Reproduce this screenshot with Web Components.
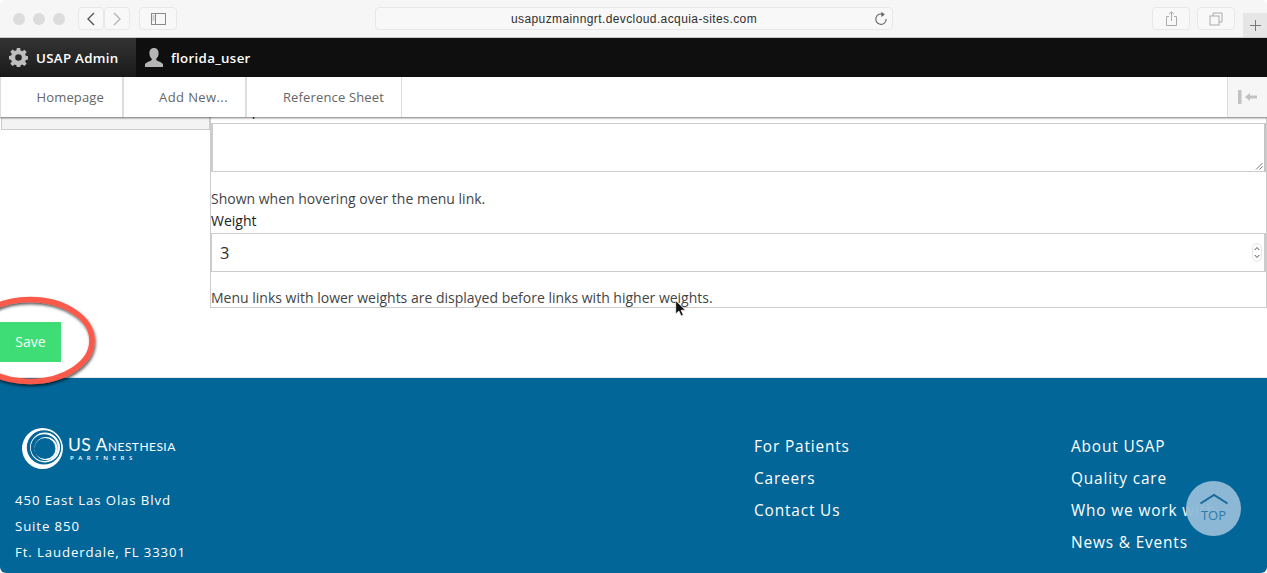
<!DOCTYPE html>
<html lang="en">
<head>
<meta charset="utf-8">
<title>USAP Admin</title>
<style>
    html, body { margin: 0; padding: 0; background: #fff; }
    body { font-family: "Open Sans", "Liberation Sans", sans-serif; width: 1267px; height: 573px; overflow: hidden; }
    #window { position: relative; width: 1267px; height: 573px; overflow: hidden; display: flex; flex-direction: column; }
</style>
</head>
<body>
<div id="window">
    <browser-bar url="usapuzmainngrt.devcloud.acquia-sites.com"></browser-bar>
    <admin-bar></admin-bar>
    <admin-tabs></admin-tabs>
    <menu-form></menu-form>
    <site-footer></site-footer>
    <red-ring></red-ring>
    <mouse-pointer></mouse-pointer>
    <top-button></top-button>
    <window-corners></window-corners>
</div>

<script>
// BROWSER BAR
class BrowserBar extends HTMLElement {
    constructor() {
        super();
        this.attachShadow({ mode: "open" });
        const url = this.getAttribute("url");

        this.shadowRoot.innerHTML = `
            <style>
                :host {
                    display: flex;
                    align-items: center;
                    height: 38px;
                    flex: none;
                    box-sizing: border-box;
                    background: #f6f6f6;
                    border-bottom: 1px solid #c9c9c9;
                    padding: 0 0 0 13px;
                    font-family: "Liberation Sans", sans-serif;
                }
                .lights { display: flex; gap: 8px; margin-right: 13px; }
                .lights i { width: 12px; height: 12px; border-radius: 50%; background: #dcdcdc; }
                .btn {
                    box-sizing: border-box;
                    height: 23px;
                    background: #f8f8f8;
                    border: 1px solid #e8e8e8;
                    border-radius: 4px;
                    display: flex;
                    align-items: center;
                    justify-content: center;
                }
                .nav { display: flex; margin-right: 9px; }
                .nav .btn { width: 26px; }
                .side { width: 38px; margin-right: 198px; }
                .url {
                    width: 518px;
                    position: relative;
                    font-size: 12px;
                    color: #2f2f2f;
                    letter-spacing: 0.4px;
                }
                .url svg { position: absolute; right: 3px; top: 3px; }
                .right { width: 38px; }
                .share { margin-left: 259px; }
                .tabs { margin-left: 7px; }
                .plus {
                    position: absolute;
                    right: 0;
                    top: 13px;
                    width: 24px;
                    height: 24px;
                    background: #e6e6e6;
                    display: flex;
                    align-items: center;
                    justify-content: center;
                }
            </style>
            <div class="lights"><i></i><i></i><i></i></div>
            <div class="nav">
                <div class="btn"><svg width="10" height="14" viewBox="0 0 10 14" fill="none" stroke="#555" stroke-width="1.4"><path d="M8 1 2 7l6 6"/></svg></div>
                <div class="btn"><svg width="10" height="14" viewBox="0 0 10 14" fill="none" stroke="#b5b5b5" stroke-width="1.4"><path d="M2 1l6 6-6 6"/></svg></div>
            </div>
            <div class="btn side"><svg width="15" height="12" viewBox="0 0 15 12" fill="none" stroke="#8a8a8a"><rect x=".5" y=".5" width="14" height="11"/><path d="M4.5 .5v11"/><path d="M1.5 3h2M1.5 5h2M1.5 7h2" stroke-width=".8"/></svg></div>
            <div class="btn url">${url}<svg width="16" height="16" viewBox="0 0 16 16" fill="none" stroke="#666" stroke-width="1.1"><path d="M10.5 3.600A5.200 5.200 0 1 0 13.200 8"/><path d="M8.300 .8l3.600 2.600-3.600 2.600z" fill="#666" stroke="none"/></svg></div>
            <div class="btn right share"><svg width="13" height="16" viewBox="0 0 13 16" fill="none" stroke="#aaa"><path d="M4 5.500H1.500v9h10v-9H9"/><path d="M6.500 10V1M4 3.200 6.500 .8 9 3.200"/></svg></div>
            <div class="btn right tabs"><svg width="14" height="14" viewBox="0 0 14 14" fill="none" stroke="#aaa"><rect x="1" y="4" width="9" height="9"/><path d="M4 4V1h9v9h-3"/></svg></div>
            <div class="plus"><svg width="13" height="13" viewBox="0 0 13 13" stroke="#777" stroke-width="1"><path d="M6.500 1v11M1 6.500h11"/></svg></div>
        `;
    }
}
customElements.define("browser-bar", BrowserBar);


// ADMIN BAR
class AdminBar extends HTMLElement {
    constructor() {
        super();
        this.attachShadow({ mode: "open" });

        this.shadowRoot.innerHTML = `
            <style>
                :host {
                    display: flex;
                    height: 39px;
                    flex: none;
                    background: #0f0f0f;
                    color: #fff;
                    font-size: 13.300px;
                    font-weight: 600;
                    letter-spacing: 0.3px;
                }
                .item { display: flex; align-items: center; gap: 8px; }
                .site {
                    width: 136px;
                    box-sizing: border-box;
                    padding-left: 9px;
                    background: linear-gradient(#333, #1a1a1a);
                }
                .user { padding-left: 8px; gap: 7px; }
            </style>
            <div class="item site">
                <svg width="19" height="19" viewBox="0 0 20 20"><path fill="#bdbdbd" fill-rule="evenodd" d="M8.300 0h3.400l.5 2.700 1.700.7L16.200 1.800l2.400 2.400-1.600 2.300.7 1.700 2.700.5v3.400l-2.700.5-.7 1.700 1.600 2.300-2.400 2.400-2.300-1.600-1.700.7-.5 2.700H8.300l-.5-2.700-1.700-.7-2.300 1.600-2.400-2.400 1.600-2.300-.7-1.700L-.4 11.600V8.400l2.700-.5.7-1.700-1.600-2.300 2.400-2.400 2.300 1.600 1.700-.7zM10 6.500a3.500 3.500 0 1 0 0 7 3.500 3.500 0 0 0 0-7z"/></svg>
                <span>USAP Admin</span>
            </div>
            <div class="item user">
                <svg width="20" height="20" viewBox="0 0 20 20"><path fill="#b5b5b5" d="M10 0c3 0 4.600 2.200 4.600 5.200 0 2.300-1 4.300-2.100 5.300-.5.500-.3 1.700.4 2.100 1.800 1 5 2 6.100 3.400V19H1v-3c1.100-1.400 4.300-2.400 6.100-3.400.7-.4.900-1.600.4-2.100C6.400 9.500 5.400 7.500 5.400 5.200 5.400 2.200 7 0 10 0z"/></svg>
                <span>florida_user</span>
            </div>
        `;
    }
}
customElements.define("admin-bar", AdminBar);


// TABS
class AdminTabs extends HTMLElement {
    constructor() {
        super();
        this.attachShadow({ mode: "open" });

        this.shadowRoot.innerHTML = `
            <style>
                :host {
                    display: flex;
                    height: 40px;
                    flex: none;
                    box-sizing: border-box;
                    position: relative;
                    z-index: 2;
                    background: #fff;
                    border-left: 1px solid #ddd;
                    box-shadow: 0 1px 2px rgba(0,0,0,.55);
                    font-size: 13px;
                    letter-spacing: 0.15px;
                    color: #666;
                }
                a {
                    display: flex;
                    align-items: center;
                    justify-content: flex-end;
                    box-sizing: border-box;
                    border-right: 2px solid #ddd;
                    padding: 0 17px 1px 0;
                }
                a:nth-of-type(1) { width: 123px; padding-right: 18px; }
                a:nth-of-type(2) { width: 123px; letter-spacing: 0.4px; }
                a:nth-of-type(3) { width: 155px; border-right-width: 1px; }
                .toggle {
                    margin-left: auto;
                    width: 40px;
                    box-sizing: border-box;
                    background: #f6f6f6;
                    border-left: 1px solid #ddd;
                    display: flex;
                    align-items: center;
                    justify-content: center;
                }
            </style>
            <a>Homepage</a>
            <a>Add New...</a>
            <a>Reference Sheet</a>
            <div class="toggle">
                <svg width="20" height="14" viewBox="0 0 20 14" fill="#c2c2c2"><rect x="0" y="0" width="3.500" height="14"/><path d="M7 7l5-4v2.500h7v3h-7V11z"/></svg>
            </div>
        `;
    }
}
customElements.define("admin-tabs", AdminTabs);


// FORM
class MenuForm extends HTMLElement {
    constructor() {
        super();
        this.attachShadow({ mode: "open" });

        this.shadowRoot.innerHTML = `
            <style>
                :host {
                    display: block;
                    height: 261px;
                    flex: none;
                    box-sizing: border-box;
                    position: relative;
                    overflow: hidden;
                    background: #fff;
                    border-bottom: 1px solid #e6e6e6;
                    color: #444;
                    font-size: 14px;
                }
                .cols { display: flex; align-items: flex-start; }
                .tabs {
                    width: 209px;
                    height: 13px;
                    margin-left: 1px;
                    box-sizing: border-box;
                    background: #f3f3f3;
                    border: 1px solid #ccc;
                    border-top: 0;
                }
                .panel {
                    box-sizing: border-box;
                    width: 1057px;
                    height: 191px;
                    border-right: 1px solid #ccc;
                    border-left: 1px solid #ccc;
                    border-bottom: 1px solid #ccc;
                }
                /* the label scrolled under the tabs, only a descender still shows */
                .clipped { margin: -17px 0 3px; line-height: 20px; color: #222; }
                .area {
                    height: 49px;
                    box-sizing: border-box;
                    border: 2px solid #ccc;
                    border-right-color: #c4c4c4;
                    border-top-width: 1px;
                    border-bottom-width: 1px;
                    position: relative;
                    background: #fff;
                }
                .area svg { position: absolute; right: 1px; bottom: 1px; }
                .hint { line-height: 20px; }
                .hint.one { margin-top: 17px; }
                label { display: block; line-height: 20px; margin-top: 2px; color: #222; }
                .number {
                    height: 39px;
                    margin-top: 2px;
                    box-sizing: border-box;
                    border: 1px solid #ccc;
                    border-right: 2px solid #ccc;
                    display: flex;
                    align-items: center;
                    justify-content: space-between;
                    padding: 0 2px 0 8px;
                    font-size: 16.500px;
                    color: #333;
                }
                .spin {
                    box-sizing: border-box;
                    width: 10px;
                    height: 19px;
                    border: 1px solid #e6e6e6;
                    border-radius: 5px;
                    display: flex;
                }
                .hint.two { margin-top: 16px; }
                .save {
                    position: absolute;
                    left: 0;
                    top: 205px;
                    width: 61px;
                    height: 40px;
                    box-sizing: border-box;
                    padding-bottom: 2px;
                    background: #3fdd76;
                    color: #f4fff8;
                    font-size: 14px;
                    display: flex;
                    align-items: center;
                    justify-content: center;
                }
            </style>
            <div class="cols">
                <div class="tabs"></div>
                <div class="panel">
                    <div class="clipped">Description</div>
                    <div class="area"><svg width="8" height="8" viewBox="0 0 8 8" stroke="#555" stroke-width=".8"><path d="M1 7.500 7.500 1M4.500 7.500 7.500 4.500"/></svg></div>
                    <div class="hint one">Shown when hovering over the menu link.</div>
                    <label>Weight</label>
                    <div class="number">3
                        <div class="spin"><svg width="8" height="17" viewBox="0 0 8 17" fill="none" stroke="#555"><path d="M1.700 6 4 3.500 6.300 6M1.700 11 4 13.500 6.300 11"/></svg></div>
                    </div>
                    <div class="hint two">Menu links with lower weights are displayed before links with higher weights.</div>
                </div>
            </div>
            <div class="save">Save</div>
        `;
    }
}
customElements.define("menu-form", MenuForm);


// FOOTER
class SiteFooter extends HTMLElement {
    constructor() {
        super();
        this.attachShadow({ mode: "open" });

        this.shadowRoot.innerHTML = `
            <style>
                :host {
                    display: grid;
                    grid-template-columns: 739px 317px 1fr;
                    flex: 1;
                    box-sizing: border-box;
                    background: #036698;
                    color: #fff;
                    padding: 53px 0 0 15px;
                }
                .logo { display: flex; align-items: flex-start; height: 45px; margin: -4px 0 0 6px; }
                .logo svg { flex: none; }
                .name {
                    font-family: "Lato", sans-serif;
                    font-size: 17.500px;
                    line-height: 20px;
                    margin: 8px 0 0 0;
                    letter-spacing: 0.450px;
                    font-variant: small-caps;
                    white-space: nowrap;
                }
                .name small {
                    display: block;
                    font-family: "Open Sans", sans-serif;
                    font-weight: 600;
                    font-size: 6px;
                    line-height: 8px;
                    letter-spacing: 4.600px;
                    margin: -1px 0 0 2px;
                    font-variant: normal;
                }
                address {
                    font-style: normal;
                    font-size: 13.200px;
                    font-weight: 500;
                    line-height: 26px;
                    letter-spacing: 0.900px;
                    margin-top: 15px;
                }
                ul {
                    list-style: none;
                    margin: 0;
                    padding: 0;
                    font-size: 15.400px;
                    font-weight: 500;
                    line-height: 32px;
                    letter-spacing: 0.850px;
                }
            </style>
            <div>
                <div class="logo">
                    <svg width="47" height="44" viewBox="0 0 47 44">
                        <path fill="#fff" fill-rule="evenodd" d="M21.500 1a20.500 20.500 0 1 0 0 41 20.500 20.500 0 0 0 0-41zM23 3.200a17.200 17.200 0 1 1 0 34.400 17.200 17.200 0 0 1 0-34.400z"/>
                        <path fill="#fff" fill-rule="evenodd" d="M24 5.500a15 15 0 1 0 0 30 15 15 0 0 0 0-30zM23.200 7.200a13.400 13.400 0 1 1 0 26.800 13.400 13.400 0 0 1 0-26.800z"/>
                        <path fill="#fff" fill-rule="evenodd" d="M25 10a11.500 11.500 0 1 0 0 23 11.500 11.500 0 0 0 0-23zM24 11a10.500 10.500 0 1 1 0 21 10.500 10.500 0 0 1 0-21z"/>
                    </svg>
                    <div class="name">US Anesthesia<small>PARTNERS</small></div>
                </div>
                <address>450 East Las Olas Blvd<br>Suite 850<br>Ft. Lauderdale, FL 33301</address>
            </div>
            <ul>
                <li>For Patients</li>
                <li>Careers</li>
                <li>Contact Us</li>
            </ul>
            <ul>
                <li>About USAP</li>
                <li>Quality care</li>
                <li>Who we work with</li>
                <li>News &amp; Events</li>
            </ul>
        `;
    }
}
customElements.define("site-footer", SiteFooter);


// RED CIRCLE DRAWN OVER THE SAVE BUTTON
class RedRing extends HTMLElement {
    constructor() {
        super();
        this.attachShadow({ mode: "open" });

        this.shadowRoot.innerHTML = `
            <style>
                :host { position: absolute; left: 0; top: 290px; width: 110px; height: 105px; pointer-events: none; }
                svg { display: block; overflow: visible; }
            </style>
            <svg width="110" height="105" viewBox="0 0 110 105" fill="none">
                <defs><filter id="s" x="-20%" y="-20%" width="140%" height="140%"><feDropShadow dx="1" dy="2" stdDeviation="1.500" flood-color="#000" flood-opacity=".65"/></filter></defs>
                <ellipse cx="30" cy="50.500" rx="62" ry="41" stroke="#fb5a4b" stroke-width="5.500" filter="url(#s)"/>
            </svg>
        `;
    }
}
customElements.define("red-ring", RedRing);


// MOUSE POINTER
class MousePointer extends HTMLElement {
    constructor() {
        super();
        this.attachShadow({ mode: "open" });

        this.shadowRoot.innerHTML = `
            <style>
                :host { position: absolute; left: 675px; top: 300px; width: 12px; height: 18px; }
            </style>
            <svg width="12" height="18" viewBox="0 0 12 18"><path d="M.7.500v13.500l3.200-3 2.200 5 2.200-1-2.200-4.800H10.500z" fill="#111" stroke="#fff" stroke-width=".7"/></svg>
        `;
    }
}
customElements.define("mouse-pointer", MousePointer);


// BACK TO TOP
class TopButton extends HTMLElement {
    constructor() {
        super();
        this.attachShadow({ mode: "open" });

        this.shadowRoot.innerHTML = `
            <style>
                :host {
                    position: absolute;
                    left: 1186px;
                    top: 481px;
                    width: 55px;
                    height: 55px;
                    border-radius: 50%;
                    background: rgba(146, 187, 215, .96);
                    color: #2f7aa8;
                    font-size: 13px;
                    display: flex;
                    flex-direction: column;
                    align-items: center;
                }
                svg { margin-top: 12px; }
                span { line-height: 14px; margin-top: 3px; }
            </style>
            <svg width="30" height="12" viewBox="0 0 30 12" fill="none" stroke="#17699b" stroke-width="2"><path d="M1.500 10.500 15 2l13.500 8.500"/></svg>
            <span>TOP</span>
        `;
    }
}
customElements.define("top-button", TopButton);


// ROUNDED CORNERS OF THE WINDOW
class WindowCorners extends HTMLElement {
    constructor() {
        super();
        this.attachShadow({ mode: "open" });

        this.shadowRoot.innerHTML = `
            <style>
                :host { position: absolute; inset: 0; pointer-events: none; border-radius: 6px; box-shadow: 0 0 0 8px #fff; }
            </style>
        `;
    }
}
customElements.define("window-corners", WindowCorners);
</script>
</body>
</html>
